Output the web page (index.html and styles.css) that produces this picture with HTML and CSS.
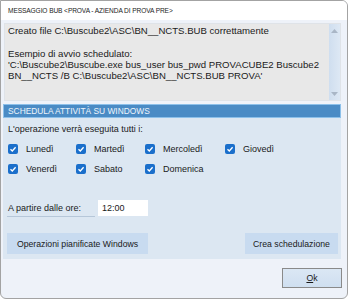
FILE: index.html
```html
<!DOCTYPE html>
<html lang="it">
<head>
<meta charset="utf-8">
<title>Messaggio BUB</title>
<link rel="stylesheet" href="styles.css">
</head>
<body>
<div class="window">
  <div class="titlebar">MESSAGGIO BUB &lt;PROVA - AZIENDA DI PROVA PRE&gt;</div>
  <div class="content">
    <div class="memo">
      <div class="memo-text">
        <div class="line">Creato file C:\Buscube2\ASC\BN__NCTS.BUB correttamente</div>
        <div class="line">&nbsp;</div>
        <div class="line">Esempio di avvio schedulato:</div>
        <div class="line">'C:\Buscube2\Buscube.exe bus_user bus_pwd PROVACUBE2 Buscube2</div>
        <div class="line">BN__NCTS /B C:\Buscube2\ASC\BN__NCTS.BUB PROVA'</div>
      </div>
      <div class="scrollbar">
        <svg class="arrow" width="7" height="4" viewBox="0 0 7 4"><path d="M0 4 L3.5 0 L7 4 Z" fill="#a9b6c6"/></svg>
        <svg class="arrow" width="7" height="4" viewBox="0 0 7 4"><path d="M0 0 L3.5 4 L7 0 Z" fill="#a9b6c6"/></svg>
      </div>
    </div>
    <div class="panel">
      <div class="panel-head">SCHEDULA ATTIVITÀ SU WINDOWS</div>
      <div class="panel-body">
        <div class="intro">L'operazione verrà eseguita tutti i:</div>
        <div class="days">
          <label class="day"><span class="check"><svg width="8" height="8" viewBox="0 0 8 8"><path d="M1.5 4.2 L3.3 6 L6.6 2.2" fill="none" stroke="#fff" stroke-width="1.3"/></svg></span>Lunedì</label>
          <label class="day"><span class="check"><svg width="8" height="8" viewBox="0 0 8 8"><path d="M1.5 4.2 L3.3 6 L6.6 2.2" fill="none" stroke="#fff" stroke-width="1.3"/></svg></span>Martedì</label>
          <label class="day"><span class="check"><svg width="8" height="8" viewBox="0 0 8 8"><path d="M1.5 4.2 L3.3 6 L6.6 2.2" fill="none" stroke="#fff" stroke-width="1.3"/></svg></span>Mercoledì</label>
          <label class="day"><span class="check"><svg width="8" height="8" viewBox="0 0 8 8"><path d="M1.5 4.2 L3.3 6 L6.6 2.2" fill="none" stroke="#fff" stroke-width="1.3"/></svg></span>Giovedì</label>
          <label class="day"><span class="check"><svg width="8" height="8" viewBox="0 0 8 8"><path d="M1.5 4.2 L3.3 6 L6.6 2.2" fill="none" stroke="#fff" stroke-width="1.3"/></svg></span>Venerdì</label>
          <label class="day"><span class="check"><svg width="8" height="8" viewBox="0 0 8 8"><path d="M1.5 4.2 L3.3 6 L6.6 2.2" fill="none" stroke="#fff" stroke-width="1.3"/></svg></span>Sabato</label>
          <label class="day"><span class="check"><svg width="8" height="8" viewBox="0 0 8 8"><path d="M1.5 4.2 L3.3 6 L6.6 2.2" fill="none" stroke="#fff" stroke-width="1.3"/></svg></span>Domenica</label>
        </div>
        <div class="time-row">
          <span class="time-label">A partire dalle ore:</span>
          <span class="time-input">12:00</span>
        </div>
        <div class="actions">
          <button class="btn">Operazioni pianificate Windows</button>
          <button class="btn">Crea schedulazione</button>
        </div>
      </div>
    </div>
    <div class="footer">
      <button class="ok"><u>O</u>k</button>
    </div>
  </div>
</div>
</body>
</html>
```
FILE: styles.css
```css
html, body {
  margin: 0;
  padding: 0;
  background: #ffffff;
}
body {
  width: 348px;
  height: 300px;
  font-family: "Liberation Sans", Arial, sans-serif;
  color: #1a1a1a;
}
.window {
  box-sizing: border-box;
  width: 348px;
  height: 299px;
  border: 1px solid #a3a3a3;
  border-radius: 0 6px 6px 6px;
  overflow: hidden;
  display: flex;
  flex-direction: column;
  background: #eef2f9;
}
.titlebar {
  height: 19px;
  flex: none;
  background: #ffffff;
  font-size: 6.6px;
  line-height: 19px;
  padding-left: 7px;
  color: #222;
  letter-spacing: -0.1px;
}
.content {
  flex: 1;
  display: flex;
  flex-direction: column;
  padding: 3px 6px 0 2px;
}
.memo {
  height: 76px;
  margin-left: 1px;
  background: #e8e8e8;
  border: 1px solid #dfe3e8;
  display: flex;
}
.memo-text {
  flex: 1;
  min-width: 0;
  overflow: hidden;
  font-size: 9.6px;
  line-height: 11.3px;
  padding: 1px 0 0 3px;
  color: #1a1a1a;
}
.line {
  white-space: nowrap;
}
.scrollbar {
  width: 11px;
  flex: none;
  background: linear-gradient(to right, #cfdeef, #dde8f4);
  display: flex;
  flex-direction: column;
  justify-content: space-between;
  align-items: center;
  padding: 5px 0 4px;
  box-sizing: border-box;
}
.arrow { display: block; }
.panel {
  margin-top: 3px;
  background: #dce7f2;
  display: flex;
  flex-direction: column;
}
.panel-head {
  height: 12px;
  background: #4a8bc5;
  border: 1px solid #8cc0ea;
  color: #eef5fc;
  font-size: 8.4px;
  line-height: 12px;
  padding-left: 4px;
}
.panel-body {
  padding: 5px 3px 5px 4px;
}
.intro {
  font-size: 9px;
  line-height: 12px;
  padding-left: 1px;
}
.days {
  margin-top: 9px;
  display: grid;
  grid-template-columns: 68px 69px 80px auto;
  row-gap: 10px;
  padding-left: 1px;
}
.day {
  display: flex;
  align-items: center;
  gap: 8px;
  font-size: 9px;
  line-height: 10px;
}
.check {
  width: 10px;
  height: 10px;
  border-radius: 2px;
  background: #1b6fcb;
  display: flex;
  align-items: center;
  justify-content: center;
}
.check svg { display: block; }
.time-row {
  margin-top: 25px;
  display: flex;
  align-items: center;
  gap: 3px;
}
.time-label {
  width: 88px;
  font-size: 9px;
  line-height: 16px;
  padding-left: 1px;
  border-bottom: 1px solid #b6c7d9;
  box-sizing: border-box;
  height: 17px;
  margin-top: 1px;
}
.time-input {
  width: 50px;
  height: 16px;
  background: #ffffff;
  font-size: 9px;
  line-height: 16px;
  padding-left: 4px;
  box-sizing: border-box;
}
.actions {
  margin-top: 16px;
  display: flex;
  justify-content: space-between;
}
.btn {
  height: 21px;
  border: none;
  background: #c8dbf0;
  font-family: "Liberation Sans", Arial, sans-serif;
  font-size: 8.7px;
  color: #1a1a1a;
  padding: 0 6px;
}
.btn:first-child { width: 141px; }
.btn:last-child { width: 93px; }
.footer {
  flex: 1;
  display: flex;
  justify-content: flex-end;
  align-items: flex-start;
  padding-top: 9px;
}
.ok {
  width: 60px;
  height: 20px;
  border: 1px solid #8a8a8a;
  background: linear-gradient(#dbe7f4, #cfdff0);
  font-family: "Liberation Sans", Arial, sans-serif;
  font-size: 8.7px;
  color: #1a1a1a;
  margin-right: -1px;
}
```
